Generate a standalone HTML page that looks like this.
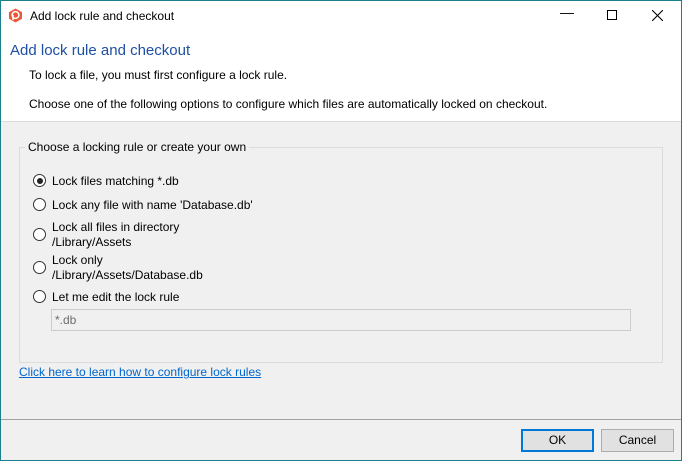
<!DOCTYPE html>
<html><head><style>
*{margin:0;padding:0;box-sizing:border-box}
body{width:682px;height:461px;overflow:hidden;font-family:"Liberation Sans",sans-serif;font-size:12px;color:#000;background:#f0f0f0;position:relative}
.win{position:absolute;left:0;top:0;width:682px;height:461px}
.frame{position:absolute;left:0;top:0;width:682px;height:461px;border:1px solid #1b7f8c}
.abs{position:absolute;white-space:nowrap}
.title{position:absolute;left:0;top:0;width:682px;height:31px;background:#fff}
.hdr{position:absolute;left:0;top:31px;width:682px;height:91px;background:#fff;border-bottom:1px solid #dcdcdc}
.radio{position:absolute;width:13px;height:13px;border:1px solid #333;border-radius:50%;background:#fff}
.radio.on::after{content:"";position:absolute;left:2.5px;top:2.5px;width:6px;height:6px;border-radius:50%;background:#222}
.btn{position:absolute;height:23px;width:73px;background:#e1e1e1;border:1px solid #adadad;text-align:center;line-height:21px}
</style></head><body>
<div class="win">
<div class="title">
<svg class="abs" style="left:8px;top:8px" width="15" height="15" viewBox="0 0 15 15"><path d="M7.5 0.5 L14 4.2 V10.8 L7.5 14.5 L1 10.8 V4.2Z" fill="#ea5a3a"/><circle cx="7.5" cy="7" r="3.4" fill="none" stroke="#fff" stroke-width="1.5"/><path d="M5 7 V12" stroke="#fff" stroke-width="1.5"/></svg>
<div class="abs" style="left:30px;top:9px">Add lock rule and checkout</div>
<div class="abs" style="left:560px;top:4px;font-size:14px">&#8212;</div>
<div class="abs" style="left:607px;top:10px;width:10px;height:10px;border:1px solid #000"></div>
<svg class="abs" style="left:652px;top:10px" width="11" height="11"><path d="M0 0L11 11M11 0L0 11" stroke="#000" stroke-width="1.1"/></svg>
</div>
<div class="hdr">
<div class="abs" style="left:10px;top:11px;font-size:15px;color:#1d4fa3">Add lock rule and checkout</div>
<div class="abs" style="left:29px;top:37px">To lock a file, you must first configure a lock rule.</div>
<div class="abs" style="left:29px;top:66px">Choose one of the following options to configure which files are automatically locked on checkout.</div>
</div>
<div class="abs" style="left:19px;top:147px;width:644px;height:216px;border:1px solid #dcdcdc"></div>
<div class="abs" style="left:25px;top:140px;background:#f0f0f0;padding:0 3px">Choose a locking rule or create your own</div>
<div class="radio on" style="left:33px;top:174px"></div><div class="abs" style="left:52px;top:174px">Lock files matching *.db</div>
<div class="radio" style="left:33px;top:198px"></div><div class="abs" style="left:52px;top:198px">Lock any file with name 'Database.db'</div>
<div class="radio" style="left:33px;top:228px"></div><div class="abs" style="left:52px;top:220px;line-height:15px">Lock all files in directory<br>/Library/Assets</div>
<div class="radio" style="left:33px;top:261px"></div><div class="abs" style="left:52px;top:253px;line-height:15px">Lock only<br>/Library/Assets/Database.db</div>
<div class="radio" style="left:33px;top:290px"></div><div class="abs" style="left:52px;top:290px">Let me edit the lock rule</div>
<div class="abs" style="left:51px;top:309px;width:580px;height:22px;border:1px solid #ccc;background:#f0f0f0;color:#6d6d6d;padding:3px 3px">*.db</div>
<div class="abs" style="left:19px;top:365px;color:#0066cc;text-decoration:underline">Click here to learn how to configure lock rules</div>
<div class="abs" style="left:0;top:419px;width:682px;height:1px;background:#a0a0a0"></div>
<div class="btn" style="left:521px;top:429px;border:2px solid #0078d7;line-height:19px">OK</div>
<div class="btn" style="left:601px;top:429px">Cancel</div>
</div>
<div class="frame"></div>
</body></html>
